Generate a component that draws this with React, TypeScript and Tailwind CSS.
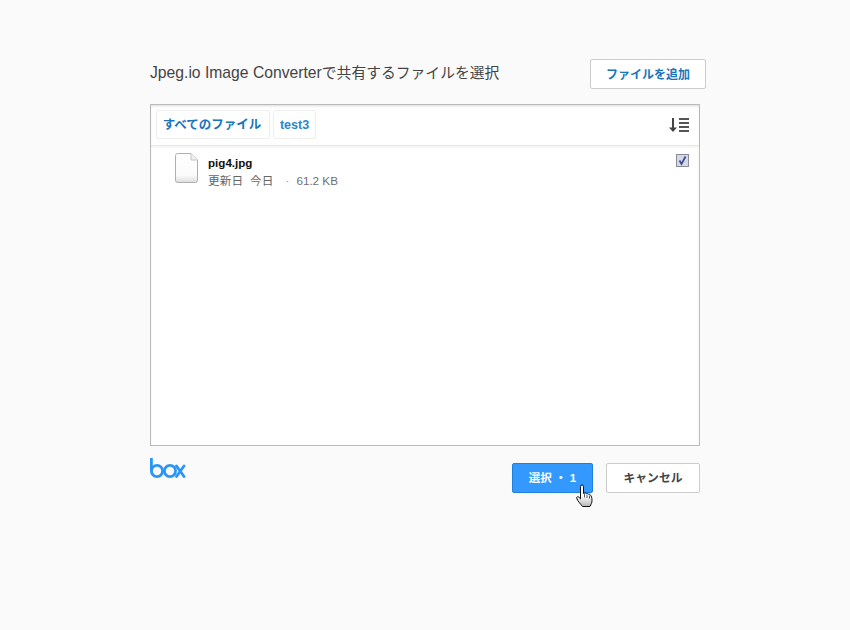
const font = "font-['Liberation_Sans','Noto_Sans_CJK_JP',sans-serif]";

function FileIcon() {
  return (
    <svg width="24" height="30" viewBox="0 0 24 30" className="block">
      <defs>
        <linearGradient id="fileFill" x1="0" y1="0" x2="0" y2="1">
          <stop offset="0" stopColor="#ffffff" />
          <stop offset="0.75" stopColor="#fbfbfb" />
          <stop offset="1" stopColor="#dcdcdc" />
        </linearGradient>
      </defs>
      <path d="M1.500 2.500a2 2 0 0 1 2-2H17L23.500 7v20.500a2 2 0 0 1-2 2h-18a2 2 0 0 1-2-2z" fill="url(#fileFill)" stroke="#b0b0b0" />
      <path d="M17 .5V7h6.500" fill="#f0f0f0" stroke="#c4c4c4" />
    </svg>
  );
}

function SortIcon() {
  return (
    <svg width="22" height="16" viewBox="0 0 22 16" className="block">
      <path d="M5 1v12" stroke="#444444" strokeWidth="2" />
      <path d="M1 10.500h8L5 15z" fill="#444444" />
      <path d="M11 2h10M11 6h10M11 10h10M11 14h10" stroke="#555555" strokeWidth="2" />
    </svg>
  );
}

function Check() {
  return (
    <div className="flex h-[13px] w-[13px] items-center justify-center border border-[#8c8c96] bg-[#d5d9e6]">
      <svg width="11" height="11" viewBox="0 0 11 11" className="block">
        <path d="M2.500 5.500 4.500 9 8.500 1.500" fill="none" stroke="#3c4a96" strokeWidth="1.700" />
      </svg>
    </div>
  );
}

function BoxLogo() {
  return (
    <svg width="36" height="20" viewBox="0 0 36 20" className="block">
      <g fill="none" stroke="#2b95f5" strokeWidth="2.800">
        <path d="M1.400 0v13" />
        <circle cx="7" cy="13" r="5.600" />
        <circle cx="20" cy="13" r="5.600" />
        <path d="M26.500 8l7.500 10.500M34 8l-7.500 10.500" strokeLinecap="round" />
      </g>
    </svg>
  );
}

function Cursor() {
  return (
    <svg width="18" height="25" viewBox="0 0 18 24" className="absolute left-[64px] top-[21px]">
      <defs>
        <linearGradient id="hand" x1="0" y1="0" x2="0" y2="1">
          <stop offset="0.5" stopColor="#ffffff" />
          <stop offset="1" stopColor="#b5b5b5" />
        </linearGradient>
      </defs>
      <path
        d="M4.500 2a1.500 1.500 0 0 1 3 0v7l1-.5c1-.3 1.500.2 1.800.7.800-.5 1.700-.3 2 .5.800-.4 1.900 0 2.200 1 .8.300 1.500 3 1.500 5 0 3-1 4-2 6.300H6.500C5 20 1 16 .7 13.500c-.2-1 1-1.800 2-1l1.800 1.800z"
        fill="url(#hand)"
        stroke="#111111"
        strokeWidth="1"
      />
      <path d="M8.500 9v4M11 10v3.500M13.500 11v3" stroke="#333333" strokeWidth="0.800" />
    </svg>
  );
}

export default function App() {
  return (
    <div className={`${font} h-[630px] w-[850px] bg-[#fafafa] pl-[150px] pt-[59px]`}>
      <div className="flex w-[556px] items-center justify-between">
        <h1 className="pb-[2px] text-[14.8px] font-normal leading-[28px] text-[#444]">
          <span className="text-[15.7px]">Jpeg.io Image Converter</span>で共有するファイルを選択
        </h1>
        <button className="h-[30px] w-[116px] rounded-[2px] border border-[#ccc] bg-white pt-[1px] text-[12px] font-bold text-[#1a74ba]">
          ファイルを追加
        </button>
      </div>

      <div className="mt-[15px] h-[342px] w-[550px] border border-[#bbb] bg-white shadow-[inset_0_2px_3px_-1px_rgba(0,0,0,0.15)]">
        <div className="flex h-[41px] items-center justify-between border-b border-[#e8e8e8] pb-[1px] pl-[5px] pr-[9px] shadow-[0_1px_2px_rgba(0,0,0,0.07)]">
          <div className="flex gap-[3px]">
            <div className="flex h-[29px] w-[114px] items-center justify-center rounded-[2px] border border-[#eee] pr-[2px] pt-[2px] text-[12.5px] font-bold text-[#1a74ba]">
              すべてのファイル
            </div>
            <div className="flex h-[29px] w-[43px] items-center justify-center rounded-[2px] border border-[#eee] pt-[2px] text-[12.5px] font-bold text-[#2a86cc]">
              test3
            </div>
          </div>
          <SortIcon />
        </div>
        <div className="flex items-start justify-between pl-[23px] pr-[10px] pt-[7px]">
          <div className="flex">
            <FileIcon />
            <div className="ml-[10px] flex flex-col pt-[3px]">
              <span className="text-[11.6px] font-bold leading-[14px] text-[#111]">pig4.jpg</span>
              <div className="mt-[3px] flex text-[11.7px] leading-[16px] text-[#666]">
                <span>更新日</span>
                <span className="ml-[7px]">今日</span>
                <span className="ml-[12px] text-[#7a9a9a]">·</span>
                <span className="ml-[7px] text-[#6f6f80]">61.2 KB</span>
              </div>
            </div>
          </div>
          <div className="mt-[1px]">
            <Check />
          </div>
        </div>
      </div>

      <div className="flex w-[550px] justify-between">
        <div className="mt-[12px]">
          <BoxLogo />
        </div>
        <div className="mt-[17px] flex gap-[13px]">
          <div className="relative">
            <button className="h-[30px] w-[81px] rounded-[2px] border border-[#1f7fdc] bg-[#3399ff] pt-[1px] text-[11.5px] font-bold text-white">
              選択 ・ 1
            </button>
            <Cursor />
          </div>
          <button className="h-[30px] w-[94px] rounded-[2px] border border-[#ccc] bg-white pt-[1px] text-[11.8px] font-bold text-[#444]">
            キャンセル
          </button>
        </div>
      </div>
    </div>
  );
}
